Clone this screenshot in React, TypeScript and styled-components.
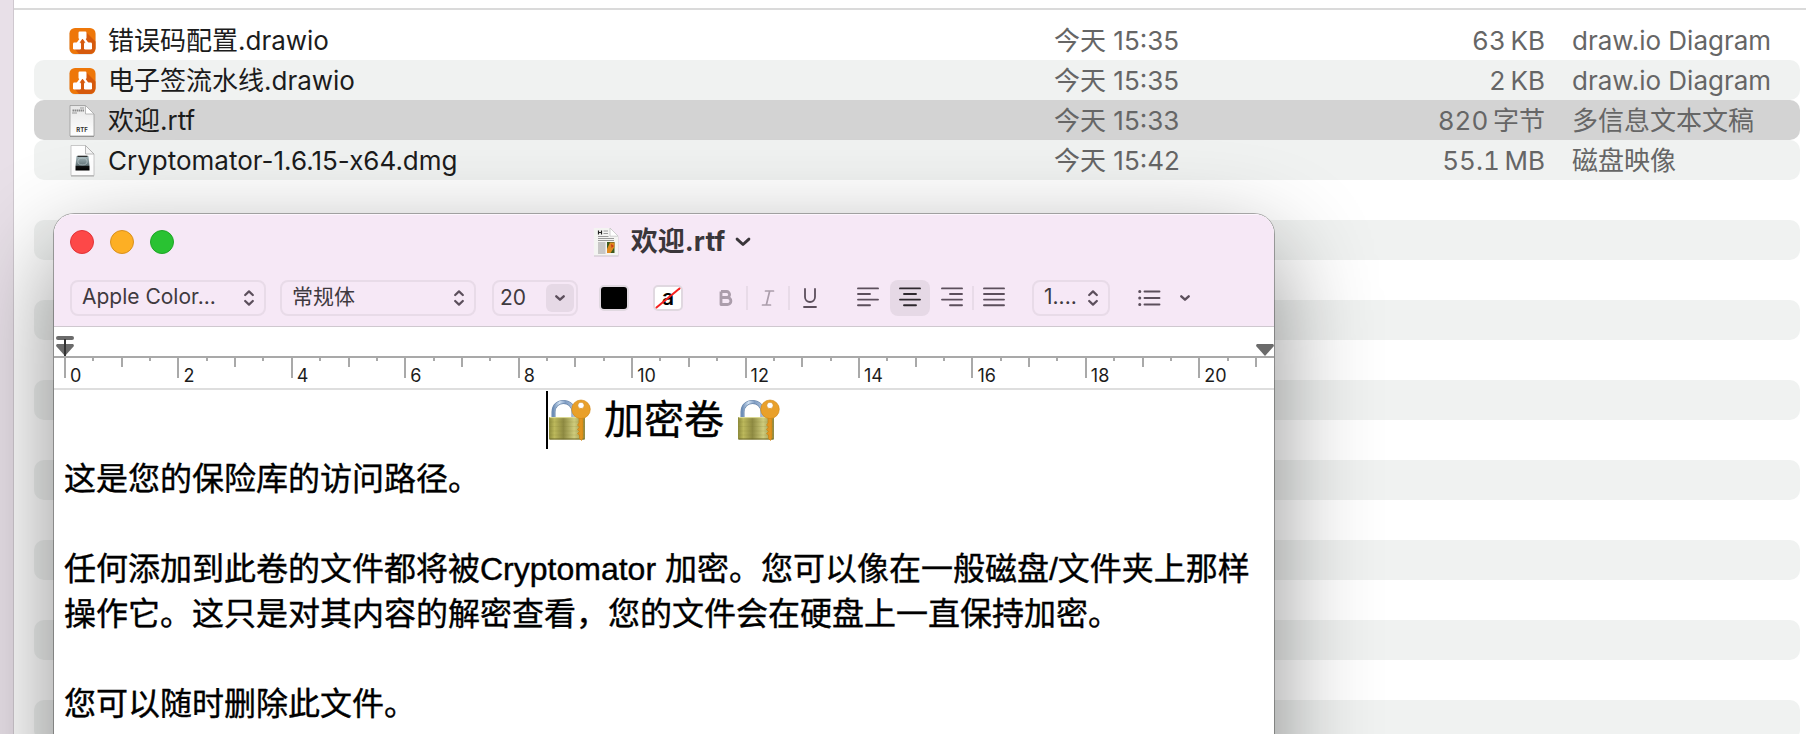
import React from 'react';
import styled, { createGlobalStyle } from 'styled-components';

const UI_FONT = "Inter, 'Noto Sans CJK SC', sans-serif";
const DOC_FONT = "'Liberation Sans', 'Noto Sans CJK SC', sans-serif";

const GlobalStyle = createGlobalStyle`
  *, *::before, *::after { box-sizing: border-box; }
  body { margin: 0; background: #fff; font-family: ${UI_FONT}; }
  button, input, select { font: inherit; color: inherit; margin: 0; padding: 0; }
`;

/* ---------- Finder ---------- */

const Desktop = styled.div`
  position: relative;
  display: flex;
  height: 100vh;
  overflow: hidden;
`;

const Sidebar = styled.aside`
  flex: none;
  width: 14px;
  background: #e8e0e8;
  border-right: 1px solid #cfc8cf;
`;

const FinderPane = styled.main`
  flex: 1;
  min-width: 0;
`;

const FinderHeader = styled.header`
  height: 10px;
  border-bottom: 2px solid #dadada;
`;

const FileTable = styled.table`
  width: calc(100% - 26px);
  margin: 10px 6px 0 20px;
  border-collapse: separate;
  border-spacing: 0;
  table-layout: fixed;
  font-size: 26px;
  line-height: 38px;
  white-space: nowrap;
`;

const Column = styled.col<{ $width?: number }>`
  width: ${(p) => (p.$width ? `${p.$width}px` : 'auto')};
`;

const FileRow = styled.tr<{ $fill: string }>`
  height: 40px;
  color: #666;
  td { padding: 2px 0 0; background: ${(p) => p.$fill}; }
  td:first-child { border-radius: 10px 0 0 10px; }
  td:last-child { border-radius: 0 10px 10px 0; }
`;

const FileName = styled.div`
  display: flex;
  align-items: center;
  gap: 12px;
  height: 38px;
  padding-left: 35px;
  color: #1c1c1c;
  svg { flex: none; }
`;

const FileSize = styled.div`
  padding-right: 27px;
  text-align: right;
  font-variant-numeric: tabular-nums;
`;

/* ---------- Editor window ---------- */

const EditorWindow = styled.section`
  position: absolute;
  top: 214px;
  bottom: -20px;
  left: 54px;
  right: 532px;
  display: flex;
  flex-direction: column;
  overflow: hidden;
  background: #fff;
  border-radius: 20px 20px 0 0;
`;

const WindowShadow = styled.div`
  position: absolute;
  top: 214px;
  bottom: -200px;
  left: 54px;
  right: 532px;
  border-radius: 20px;
  box-shadow: 0 0 0 1px rgba(0, 0, 0, 0.3), 0 36px 100px rgba(0, 0, 0, 0.45);
`;

const WindowHeader = styled.header`
  flex: none;
  height: 113px;
  background: #f6e8f6;
  border-top: 1px solid #fdf6fd;
  border-bottom: 1px solid #cfc8cf;
`;

const TitleBar = styled.div`
  display: grid;
  grid-template-columns: 1fr auto 1fr;
  align-items: center;
  height: 54px;
  padding: 0 0 0 16px;
`;

const TrafficLights = styled.div`
  display: flex;
  gap: 16px;
`;

const Light = styled.button<{ $fill: string; $edge: string }>`
  width: 24px;
  height: 24px;
  border: 1px solid ${(p) => p.$edge};
  border-radius: 50%;
  background: ${(p) => p.$fill};
`;

const TitleButton = styled.button`
  display: flex;
  align-items: center;
  gap: 10px;
  border: 0;
  background: none;
  color: #3a363a;
  font-size: 26px;
  line-height: 32px;
  h1 { margin: 0 0 0 2px; font: inherit; font-size: 27px; font-weight: 700; }
`;

const Toolbar = styled.div`
  display: flex;
  align-items: center;
  gap: 14px;
  height: 36px;
  margin-top: 11px;
  padding: 0 16px;
  color: #5c4f5c;
`;

const SelectBox = styled.label<{ $width: number }>`
  position: relative;
  flex: none;
  width: ${(p) => p.$width}px;
  height: 36px;
  svg {
    position: absolute;
    top: 10px;
    right: 12px;
    pointer-events: none;
  }
`;

const Select = styled.select`
  appearance: none;
  display: block;
  width: 100%;
  height: 36px;
  padding: 0 0 2px 10px;
  border: 2px solid #e8dbe8;
  border-radius: 8px;
  background: none;
  color: #3f3a3f;
  font-size: 21px;
  line-height: 30px;
`;

const SizeField = styled.div`
  flex: none;
  display: flex;
  align-items: center;
  width: 86px;
  height: 36px;
  margin-left: 2px;
  padding: 0 2px 0 6px;
  border: 2px solid #e8dbe8;
  border-radius: 8px;
  input {
    flex: 1;
    min-width: 0;
    border: 0;
    background: none;
    color: #3f3a3f;
    font-size: 21px;
    line-height: 30px;
  }
  button {
    display: flex;
    align-items: center;
    justify-content: center;
    width: 28px;
    height: 28px;
    border: 0;
    border-radius: 6px;
    background: #e6d9e6;
  }
`;

const SwatchGroup = styled.div`
  display: flex;
  gap: 24px;
  margin-left: 7px;
`;

const Swatch = styled.button<{ $fill: string }>`
  display: flex;
  align-items: center;
  justify-content: center;
  width: 30px;
  height: 26px;
  border: 2px solid #e0d8e0;
  border-radius: 5px;
  background: ${(p) => p.$fill};
  position: relative;
  color: #000;
  font-size: 21px;
  font-weight: 600;
  line-height: 20px;
  svg { position: absolute; inset: 0; }
`;

const ButtonGroup = styled.div<{ $start: number; $end?: number }>`
  display: flex;
  align-items: center;
  margin-left: ${(p) => p.$start}px;
  margin-right: ${(p) => p.$end ?? 0}px;
`;

const ToolButton = styled.button<{ $pressed?: boolean; $muted?: boolean }>`
  display: flex;
  align-items: center;
  justify-content: center;
  width: 40px;
  height: 36px;
  border: 0;
  border-radius: 8px;
  background: ${(p) => (p.$pressed ? '#e6d9e6' : 'none')};
  color: ${(p) => (p.$pressed ? '#2e282e' : p.$muted ? '#ab9dab' : '#5c4f5c')};
`;

const Divider = styled.span<{ $clear?: boolean }>`
  width: 2px;
  height: 24px;
  background: ${(p) => (p.$clear ? 'transparent' : '#e8dbe8')};
`;

const ListButton = styled(ToolButton)`
  justify-content: flex-start;
  gap: 19px;
  width: 56px;
  margin-left: 14px;
`;

/* ---------- Ruler ---------- */

const Ruler = styled.div`
  flex: none;
  position: relative;
  height: 63px;
  padding-top: 29px;
  border-bottom: 2px solid #dedede;
`;

const RulerScale = styled.div`
  display: grid;
  grid-template-columns: repeat(21, 1fr) 0;
  height: 32px;
  padding: 0 19px 0 10px;
  border-top: 2px solid #a9a9a9;
`;

const Centimetre = styled.div<{ $major: boolean; $last: boolean }>`
  position: relative;
  color: #1c1c1c;
  font-size: 18px;
  line-height: 18px;
  padding: 9px 0 0 6px;
  white-space: nowrap;
  &::before {
    content: '';
    position: absolute;
    top: 0;
    left: 0;
    width: 2px;
    height: ${(p) => (p.$major ? 20 : 9)}px;
    background: #a9a9a9;
  }
  &::after {
    content: '';
    position: absolute;
    top: 0;
    left: 50%;
    display: ${(p) => (p.$last ? 'none' : 'block')};
    width: 2px;
    height: 3px;
    background: #a9a9a9;
  }
`;

const Marker = styled.svg<{ $side: 'left' | 'right' }>`
  position: absolute;
  top: 9px;
  ${(p) => (p.$side === 'left' ? 'left: 2px;' : 'right: 0;')}
`;

/* ---------- Document ---------- */

const Document = styled.article`
  padding: 1px 10px 0;
  color: #000;
  font-family: ${DOC_FONT};
  font-size: 32px;
  line-height: 45px;
  -webkit-text-stroke: 0.4px #000;
  p { min-height: 45px; margin: 0; }
`;

const Heading = styled.h2`
  display: flex;
  align-items: center;
  justify-content: center;
  gap: 13px;
  height: 58px;
  margin: 0 2px 8px 0;
  font-size: 40px;
  font-weight: 400;
  line-height: 58px;
`;

const Caret = styled.span`
  width: 2px;
  height: 58px;
  margin-right: -13px;
  background: #000;
`;

/* ---------- Icons ---------- */

const DrawioIcon = () => (
  <svg width="27" height="28" viewBox="0 0 27 28" aria-hidden="true">
    <rect x="0.5" y="1.5" width="26" height="26" rx="5.5" fill="#d8d8d8" />
    <rect x="0.5" y="1" width="26" height="26" rx="5.5" fill="#ee7709" />
    <path d="M17 5 L26.5 14.500 V21 A6 6 0 0 1 20.500 27 H10 L5 21 L12 12 Z" fill="#d65a0d" />
    <path d="M12.500 11 L8.200 17 M14.500 11 L18.800 17" stroke="#fff" strokeWidth="2.200" />
    <rect x="9.500" y="4.500" width="8" height="7.500" rx="1.200" fill="#fff" />
    <rect x="4" y="15.500" width="8" height="7" rx="1.200" fill="#fff" />
    <rect x="15" y="15.500" width="8" height="7" rx="1.200" fill="#fff" />
  </svg>
);

const RtfIcon = () => (
  <svg width="27" height="34" viewBox="0 0 27 34" aria-hidden="true">
    <defs>
      <linearGradient id="sheet" x1="0" y1="0" x2="0" y2="1">
        <stop offset="0" stopColor="#e6e6e6" />
        <stop offset="1" stopColor="#fff" />
      </linearGradient>
    </defs>
    <path d="M1 2 H16.500 L25 10.500 V32 H1 Z" fill="#8f8f8f" transform="translate(0 1)" />
    <path d="M1 1.500 H16.500 L25 10 V32 H1 Z" fill="url(#sheet)" stroke="#999" strokeWidth="0.800" />
    <path d="M16.500 1.500 V10 H25 Z" fill="#fff" stroke="#aaa" strokeWidth="0.800" />
    <path d="M11 4 H15 M3 9 H8" stroke="#999" strokeWidth="1" />
    <path d="M3.500 6.500 H15" stroke="#888" strokeWidth="2" strokeDasharray="1.500 .5" />
    <text x="13" y="28" textAnchor="middle" fontFamily="Inter, sans-serif" fontSize="6" fontWeight="700" fill="#333">RTF</text>
  </svg>
);

const DmgIcon = () => (
  <svg width="27" height="34" viewBox="0 0 27 34" aria-hidden="true">
    <defs>
      <linearGradient id="disk" x1="0" y1="0" x2="0" y2="1">
        <stop offset="0" stopColor="#a9bcc0" />
        <stop offset="0.640" stopColor="#66777b" />
        <stop offset="0.720" stopColor="#111" />
        <stop offset="1" stopColor="#000" />
      </linearGradient>
    </defs>
    <path d="M2 2.500 H16.500 L25 11 V32.500 H2 Z" fill="#aaa" />
    <path d="M2 1.500 H16.500 L25 10 V31.500 H2 Z" fill="#fff" stroke="#b5b5b5" strokeWidth="0.700" />
    <path d="M16.500 1.500 V10 H25 Z" fill="#f6f6f6" stroke="#aaa" strokeWidth="0.800" />
    <path d="M7.500 12 H19.500 L20.500 22 V26.500 H6.500 V22 Z" fill="url(#disk)" />
    <path d="M8.500 12.300 H18.500" stroke="#222" strokeWidth="1.200" />
    <ellipse cx="13.500" cy="17.500" rx="4.600" ry="3.400" fill="none" stroke="#c3d0d3" strokeWidth="0.600" />
  </svg>
);

const DocumentIcon = () => (
  <svg width="26" height="30" viewBox="0 0 26 30" aria-hidden="true">
    <path d="M1 2 H17 L25.500 10.500 V29.500 H1 Z" fill="#c9bfc9" />
    <path d="M0.800 1 H17 L25.200 9.200 V28.500 H0.800 Z" fill="#f4f4f2" />
    <path d="M17 1 V9.200 H25.200 Z" fill="#fff" stroke="#c4c4c4" strokeWidth="0.800" />
    <path d="M5.500 3.500 V7.500 M8.500 3.500 V7.500 M5 5.500 H8.500" stroke="#222" strokeWidth="1.200" />
    <path d="M10.500 4 H15 M10.500 6.500 H15 M5 9.500 H15.500 M5 11.500 H21 M5 13.500 H21 M5 16 H12.500 M5 18 H12.500 M5 20 H12.500 M5 22 H12.500 M5 24 H12.500 M5 26 H12.500" stroke="#9a9a9a" strokeWidth="1" />
    <rect x="14" y="15" width="7.500" height="11" fill="#3c5a1d" />
    <path d="M14 22 L17 15.500 H21.500 V20 L17.500 26 H14 Z" fill="#e08a1e" />
    <path d="M18 17 L21 19 L18.500 21 Z" fill="#c93a16" />
  </svg>
);

const Stepper = () => (
  <svg width="10" height="16" viewBox="0 0 10 16" fill="none" stroke="#5c4f5c" strokeWidth="2.200" strokeLinecap="round" strokeLinejoin="round" aria-hidden="true">
    <path d="M1.200 5 L5 1.400 L8.800 5 M1.200 11 L5 14.600 L8.800 11" />
  </svg>
);

const Chevron = ({ width = 10, stroke = 2.4 }: { width?: number; stroke?: number }) => (
  <svg width={width} height={(width * 6) / 10} viewBox="0 0 10 6" fill="none" stroke="currentColor" strokeWidth={stroke} strokeLinecap="round" strokeLinejoin="round" aria-hidden="true">
    <path d="M1.300 1.300 L5 4.700 L8.700 1.300" />
  </svg>
);

const Slash = () => (
  <svg width="26" height="22" viewBox="0 0 26 22" aria-hidden="true">
    <path d="M1.500 20.500 L24.500 1.500" stroke="#f5201f" strokeWidth="2" strokeLinecap="round" />
  </svg>
);

const BoldIcon = () => (
  <svg width="14" height="16" viewBox="0 0 14 16" fill="none" stroke="currentColor" strokeWidth="2.800" strokeLinejoin="round" aria-hidden="true">
    <path d="M2 1.500 H7.600 A3 3 0 0 1 7.600 7.500 H2 M7.600 7.500 H8.400 A3.500 3.500 0 0 1 8.400 14.500 H2 V1.500" />
  </svg>
);

const ItalicIcon = () => (
  <svg width="14" height="16" viewBox="0 0 14 16" fill="none" stroke="currentColor" strokeWidth="1.700" strokeLinecap="round" aria-hidden="true">
    <path d="M4.500 1 H12.500 M1.500 15 H9.500 M8.700 1 L5.300 15" />
  </svg>
);

const UnderlineIcon = () => (
  <svg width="16" height="20" viewBox="0 0 16 20" fill="none" stroke="currentColor" strokeWidth="1.800" strokeLinecap="round" aria-hidden="true">
    <path d="M3 1 V9 A5 5 0 0 0 13 9 V1 M2 19 H14" />
  </svg>
);

const lineSets = {
  left: [[1, 21], [1, 13], [1, 21], [1, 13]],
  center: [[1, 21], [5, 17], [1, 21], [5, 17]],
  right: [[1, 21], [9, 21], [1, 21], [9, 21]],
  justify: [[1, 21], [1, 21], [1, 21], [1, 21]],
};

const AlignIcon = ({ kind }: { kind: keyof typeof lineSets }) => (
  <svg width="22" height="22" viewBox="0 0 22 22" stroke="currentColor" strokeWidth="1.900" strokeLinecap="round" aria-hidden="true">
    {lineSets[kind].map(([from, to], i) => (
      <path key={i} d={`M${from} ${[1.4, 7, 12.6, 18.2][i]} H${to}`} />
    ))}
  </svg>
);

const ListIcon = () => (
  <svg width="23" height="18" viewBox="0 0 23 18" stroke="currentColor" strokeWidth="1.900" strokeLinecap="round" aria-hidden="true">
    <path d="M6.500 2.500 H21.500 M6.500 9 H21.500 M6.500 15.500 H21.500" />
    <path d="M1.700 2.500 H1.800 M1.700 9 H1.800 M1.700 15.500 H1.800" strokeWidth="3" />
  </svg>
);

const LockIcon = ({ id }: { id: string }) => (
  <svg width="43" height="44" viewBox="0 0 43 44" role="img" aria-label="🔐">
    <defs>
      <linearGradient id={`${id}-body`} x1="0" y1="0" x2="1" y2="0">
        <stop offset="0" stopColor="#8c8a3a" />
        <stop offset="0.150" stopColor="#bdb95c" />
        <stop offset="0.400" stopColor="#8e8a42" />
        <stop offset="0.700" stopColor="#cfcc7c" />
        <stop offset="1" stopColor="#8f8a43" />
      </linearGradient>
      <linearGradient id={`${id}-shackle`} x1="0" y1="0" x2="1" y2="0">
        <stop offset="0" stopColor="#6f8fb8" />
        <stop offset="0.300" stopColor="#cfe0f2" />
        <stop offset="0.600" stopColor="#7f9cc2" />
        <stop offset="1" stopColor="#a9c0dc" />
      </linearGradient>
    </defs>
    <path d="M5.500 21 V14 C5.500 0.500 25.500 0.500 25.500 14 V21" fill="none" stroke="#6482a8" strokeWidth="4" />
    <path d="M5.500 21 V14 C5.500 0.500 25.500 0.500 25.500 14 V21" fill="none" stroke={`url(#${id}-shackle)`} strokeWidth="2.800" />
    <rect x="1" y="19" width="36" height="22.500" rx="1" fill={`url(#${id}-body)`} />
    <path d="M2 19.600 H36" stroke="#e0de9a" strokeWidth="1" />
    <path d="M1.500 24 H36.500 M1.500 28.500 H36.500 M1.500 33 H36.500 M1.500 37 H36.500" stroke="#7d7a30" strokeWidth="0.500" opacity="0.300" />
    <path d="M1.500 41 H36.500" stroke="#6f6b2a" strokeWidth="1.200" />
    <path d="M31 18 H35 V40 L33.500 42.500 L31.500 40.500 V37 L29.500 35.500 L31.500 33.500 L29.500 31.500 L31.500 29 L29.500 27 L31 25 Z" fill="#e0941f" stroke="#c87c0c" strokeWidth="0.600" />
    <path fillRule="evenodd" d="M33 2 A9.300 9.300 0 1 1 33 20.600 A9.300 9.300 0 1 1 33 2 Z M33 4.200 A3.200 3.200 0 1 0 33 10.600 A3.200 3.200 0 1 0 33 4.200 Z" fill="#e9a02a" stroke="#d0850f" strokeWidth="0.600" />
  </svg>
);

/* ---------- Data ---------- */

const files = [
  { name: '错误码配置.drawio', icon: <DrawioIcon />, date: '今天 15:35', size: '63\u2009KB', kind: 'draw.io Diagram' },
  { name: '电子签流水线.drawio', icon: <DrawioIcon />, date: '今天 15:35', size: '2\u2009KB', kind: 'draw.io Diagram' },
  { name: '欢迎.rtf', icon: <RtfIcon />, date: '今天 15:33', size: '820\u2009字节', kind: '多信息文本文稿', selected: true },
  { name: 'Cryptomator-1.6.15-x64.dmg', icon: <DmgIcon />, date: '今天 15:42', size: '55.1\u2009MB', kind: '磁盘映像' },
];

const EMPTY_ROWS = 14;
const stripe = (index: number) => (index % 2 ? '#f0f2f1' : 'transparent');

export default function App() {
  return (
    <>
      <GlobalStyle />
      <Desktop>
        <Sidebar />
        <FinderPane>
          <FinderHeader />
          <FileTable aria-label="文件">
            <colgroup>
              <Column />
              <Column $width={292} />
              <Column $width={226} />
              <Column $width={228} />
            </colgroup>
            <tbody>
              {files.map((file, i) => (
                <FileRow key={file.name} $fill={file.selected ? '#d3d3d3' : stripe(i)}>
                  <td>
                    <FileName>
                      {file.icon}
                      {file.name}
                    </FileName>
                  </td>
                  <td>{file.date}</td>
                  <td>
                    <FileSize>{file.size}</FileSize>
                  </td>
                  <td>{file.kind}</td>
                </FileRow>
              ))}
              {Array.from({ length: EMPTY_ROWS }, (_, i) => (
                <FileRow key={i} $fill={stripe(i + files.length)} aria-hidden="true">
                  <td colSpan={3} />
                  <td />
                </FileRow>
              ))}
            </tbody>
          </FileTable>
        </FinderPane>

        <WindowShadow />
        <EditorWindow aria-label="欢迎.rtf">
          <WindowHeader>
            <TitleBar>
              <TrafficLights>
                <Light $fill="#fd4848" $edge="#e03338" aria-label="关闭" />
                <Light $fill="#fdaf24" $edge="#d8901f" aria-label="最小化" />
                <Light $fill="#29c232" $edge="#1fa527" aria-label="缩放" />
              </TrafficLights>
              <TitleButton>
                <DocumentIcon />
                <h1>欢迎.rtf</h1>
                <Chevron width={16} stroke={1.8} />
              </TitleButton>
            </TitleBar>
            <Toolbar role="toolbar" aria-label="格式">
              <SelectBox $width={196}>
                <Select aria-label="字体">
                  <option>Apple Color...</option>
                </Select>
                <Stepper />
              </SelectBox>
              <SelectBox $width={196}>
                <Select aria-label="字样">
                  <option>常规体</option>
                </Select>
                <Stepper />
              </SelectBox>
              <SizeField>
                <input type="text" defaultValue="20" aria-label="字号" />
                <button aria-label="选择字号">
                  <Chevron />
                </button>
              </SizeField>
              <SwatchGroup>
                <Swatch $fill="#000" aria-label="文本颜色" />
                <Swatch $fill="#fff" aria-label="文本背景颜色">
                  a
                  <Slash />
                </Swatch>
              </SwatchGroup>
              <ButtonGroup $start={9}>
                <ToolButton $muted aria-label="粗体"><BoldIcon /></ToolButton>
                <Divider />
                <ToolButton $muted aria-label="斜体"><ItalicIcon /></ToolButton>
                <Divider />
                <ToolButton aria-label="下划线"><UnderlineIcon /></ToolButton>
              </ButtonGroup>
              <ButtonGroup $start={4} $end={4}>
                <ToolButton aria-label="左对齐"><AlignIcon kind="left" /></ToolButton>
                <Divider $clear />
                <ToolButton $pressed aria-pressed="true" aria-label="居中"><AlignIcon kind="center" /></ToolButton>
                <Divider $clear />
                <ToolButton aria-label="右对齐"><AlignIcon kind="right" /></ToolButton>
                <Divider />
                <ToolButton aria-label="两端对齐"><AlignIcon kind="justify" /></ToolButton>
              </ButtonGroup>
              <SelectBox $width={78}>
                <Select aria-label="行间距">
                  <option>1....</option>
                </Select>
                <Stepper />
              </SelectBox>
              <ListButton aria-label="列表">
                <ListIcon />
                <Chevron />
              </ListButton>
            </Toolbar>
          </WindowHeader>

          <Ruler>
            <RulerScale>
              {Array.from({ length: 22 }, (_, cm) => (
                <Centimetre key={cm} $major={cm % 2 === 0} $last={cm === 21}>
                  {cm % 2 === 0 ? cm : ''}
                </Centimetre>
              ))}
            </RulerScale>
            <Marker $side="left" width="18" height="22" viewBox="0 0 18 22" aria-hidden="true">
              <rect y="0" width="18" height="4" rx="2" fill="#6b6b6b" />
              <path d="M1 8 H17 Q18.500 9 17.500 10.500 L9 20 L0.500 10.500 Q-0.500 9 1 8 Z" fill="#6b6b6b" />
              <path d="M9 3 V20" stroke="#333" strokeWidth="2" />
            </Marker>
            <Marker $side="right" width="18" height="22" viewBox="0 0 18 22" aria-hidden="true">
              <path d="M1 8 H17 Q18.500 9 17.500 10.500 L9 20 L0.500 10.500 Q-0.500 9 1 8 Z" fill="#6b6b6b" />
            </Marker>
          </Ruler>

          <Document lang="zh-CN">
            <Heading>
              <Caret />
              <LockIcon id="lock-start" />
              加密卷
              <LockIcon id="lock-end" />
            </Heading>
            <p>这是您的保险库的访问路径。</p>
            <p />
            <p>
              任何添加到此卷的文件都将被Cryptomator 加密。您可以像在一般磁盘/文件夹上那样操作它。这只是对其内容的解密查看，您的文件会在硬盘上一直保持加密。
            </p>
            <p />
            <p>您可以随时删除此文件。</p>
          </Document>
        </EditorWindow>
      </Desktop>
    </>
  );
}
